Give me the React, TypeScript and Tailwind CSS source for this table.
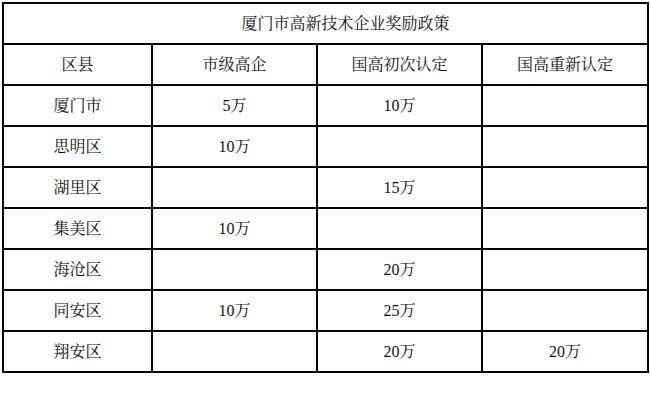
import React from 'react';

const ROWS: { area: string; city: string; first: string; renew: string }[] = [
  { area: '厦门市', city: '5万', first: '10万', renew: '' },
  { area: '思明区', city: '10万', first: '', renew: '' },
  { area: '湖里区', city: '', first: '15万', renew: '' },
  { area: '集美区', city: '10万', first: '', renew: '' },
  { area: '海沧区', city: '', first: '20万', renew: '' },
  { area: '同安区', city: '10万', first: '25万', renew: '' },
  { area: '翔安区', city: '', first: '20万', renew: '20万' },
];

const cell = 'border-2 border-black h-[41px] p-0 text-center align-middle';

export default function App() {
  return (
    <div
      className="w-[650px] h-[414px] bg-white pt-[2px] pl-[2px] text-[16px] text-[#111]"
      style={{ fontFamily: '"Liberation Serif", "Noto Serif CJK SC", "Noto Sans CJK SC", serif' }}
    >
      <table className="w-[645px] border-collapse table-fixed">
        <colgroup>
          <col className="w-[149px]" />
          <col className="w-[165px]" />
          <col className="w-[165px]" />
          <col className="w-[166px]" />
        </colgroup>
        <tbody>
          <tr>
            <td colSpan={4} className={`${cell} pl-[40px]`}>厦门市高新技术企业奖励政策</td>
          </tr>
          <tr>
            <td className={cell}>区县</td>
            <td className={cell}>市级高企</td>
            <td className={cell}>国高初次认定</td>
            <td className={cell}>国高重新认定</td>
          </tr>
          {ROWS.map(r => (
            <tr key={r.area}>
              <td className={cell}>{r.area}</td>
              <td className={cell}>{r.city}</td>
              <td className={cell}>{r.first}</td>
              <td className={cell}>{r.renew}</td>
            </tr>
          ))}
        </tbody>
      </table>
    </div>
  );
}
